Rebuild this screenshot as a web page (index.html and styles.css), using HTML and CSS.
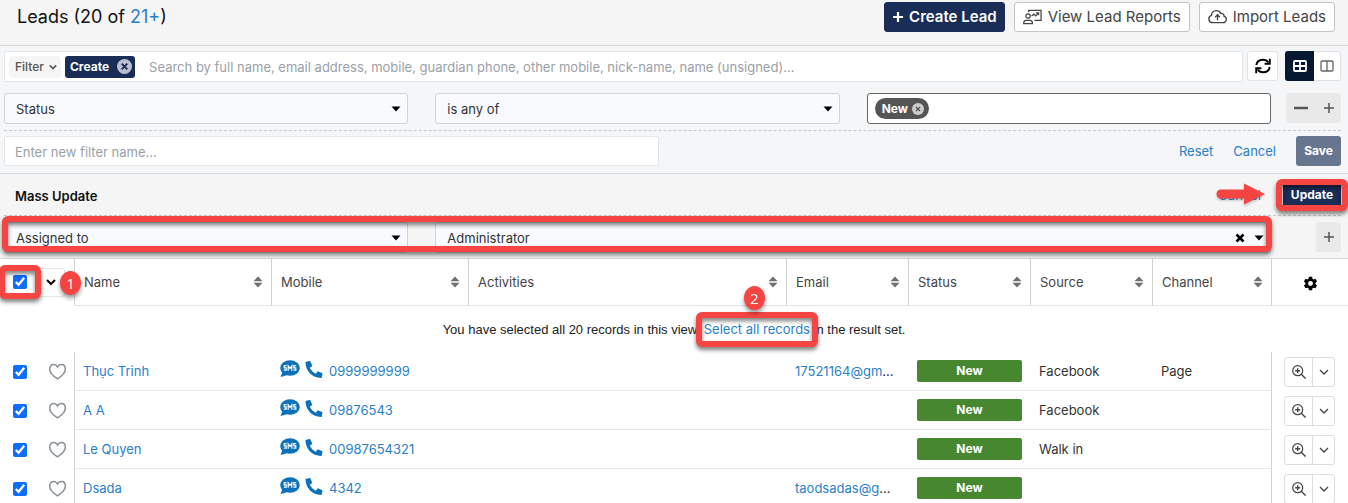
FILE: index.html
```html
<!DOCTYPE html>
<html lang="en">
<head>
<meta charset="utf-8">
<title>Leads</title>
<link rel="stylesheet" href="styles.css">
</head>
<body>
<svg class="defs" aria-hidden="true">
  <symbol id="caret" viewBox="0 0 10 6"><path d="M0.5 0.5h9L5 5.5z" fill="currentColor"/></symbol>
  <symbol id="chev" viewBox="0 0 10 10"><path d="M1 3l4 4 4-4" fill="none" stroke="currentColor" stroke-width="var(--w,1.3)"/></symbol>
  <symbol id="sort" viewBox="0 0 10 12"><path d="M5 0.5l4.5 4.8h-9zM5 11.5l4.500-4.800h-9z" fill="#707070"/></symbol>
  <symbol id="heart" viewBox="0 0 20 18"><path d="M10 16.700C7.600 15.200 1.700 11.400 1.700 6.300 1.700 3.400 3.600 1.500 5.900 1.500c1.900 0 3.300 1 4.100 2.700.8-1.700 2.200-2.700 4.100-2.700 2.300 0 4.200 1.900 4.200 4.800 0 5.100-5.900 8.900-8.300 10.400z" fill="none" stroke="#8a9199" stroke-width="1.600"/></symbol>
  <symbol id="sms" viewBox="0 0 20 18"><ellipse cx="10" cy="8" rx="9.800" ry="7.800" fill="#0d71ba"/><path d="M2 10.500C2.300 13 1.700 15 .3 16.600c2.500.2 4.900-.5 6.900-2z" fill="#0d71ba"/><path d="M6.600 5.600H4.200v2.300h2v2.300H3.800M8.200 10.800V5.800l1.800 2.600 1.800-2.600v5M16.200 5.600h-2.400v2.300h2v2.300h-2.400" fill="none" stroke="#fff" stroke-width="1.200"/></symbol>
  <symbol id="phone" viewBox="0 0 512 512"><path transform="translate(512 0) scale(-1 1)" fill="#0d71ba" d="M493.400 24.600l-104-24c-11.300-2.600-22.900 3.300-27.500 13.900l-48 112c-4.200 9.800-1.400 21.300 6.900 28l60.600 49.600c-36 76.700-98.900 140.500-177.200 177.200l-49.600-60.600c-6.800-8.300-18.200-11.100-28-6.900l-112 48C3.900 366.500-2 378.100.6 389.400l24 104C27.100 504.200 36.700 512 48 512c256.100 0 464-207.500 464-464 0-11.200-7.700-20.900-18.600-23.400z"/></symbol>
  <symbol id="zoom" viewBox="0 0 14 14"><circle cx="5.700" cy="5.700" r="5" fill="none" stroke="#444" stroke-width="1.200"/><path d="M5.700 3.200v5M3.200 5.700h5M9.300 9.300l4.300 4.300" fill="none" stroke="#444" stroke-width="1.400"/></symbol>
  <symbol id="plus" viewBox="0 0 12 12"><path d="M6 1v10M1 6h10" fill="none" stroke="currentColor" stroke-width="var(--w,1.5)"/></symbol>
</svg>

<div class="app">
  <header class="top">
    <h1>Leads (20 of <a href="#">21+</a>)</h1>
    <div class="top-actions">
      <button class="btn primary"><svg class="i12 bold"><use href="#plus"/></svg>Create Lead</button>
      <button class="btn"><svg class="i19" viewBox="0 0 20 16" fill="none" stroke="#444" stroke-width="1.300"><path d="M6 3V1h13v10.500h-7"/><circle cx="5.300" cy="7" r="2.300"/><path d="M.8 15v-1c0-1.500 1.200-2.500 2.700-2.500h3.700c1.500 0 2.700 1 2.700 2.500v1zM9 7l2.500-2 1.800 1.800 3-3M13.800 3.700h2.600v2.500"/></svg>View Lead Reports</button>
      <button class="btn"><svg class="i19" viewBox="0 0 20 16" fill="none" stroke="#444" stroke-width="1.400"><path d="M5 14a4 4 0 0 1-1.300-7.800C3.600 3.300 6 1.200 8.700 1.200c2.200 0 4 1.200 4.800 3 1.900-.3 3.500.9 3.300 3 1.500.5 2.500 1.800 2.500 3.300A3.500 3.500 0 0 1 15.800 14z"/><path d="M10 11.500V6M7.500 8.200 10 5.700l2.500 2.500"/></svg>Import Leads</button>
    </div>
  </header>

  <section class="filters">
    <div class="search-row">
      <div class="search">
        <button class="filter-btn">Filter <svg class="i8 heavy"><use href="#chev"/></svg></button>
        <button class="chip">Create <svg class="i15" viewBox="0 0 16 16"><circle cx="8" cy="8" r="8" fill="#b9c1d0"/><path d="M5 5l6 6M11 5l-6 6" stroke="#1a2d57" stroke-width="2"/></svg></button>
        <input type="text" aria-label="Search leads" placeholder="Search by full name, email address, mobile, guardian phone, other mobile, nick-name, name (unsigned)...">
      </div>
      <button class="square" aria-label="Refresh"><svg class="i16" viewBox="0 0 16 16" fill="none" stroke="#000" stroke-width="1.900"><path d="M1.300 7C1.800 3.900 4.500 1.700 7.900 1.700c2.300 0 4.300 1 5.500 2.800M14.700 9c-.5 3.100-3.200 5.300-6.600 5.300-2.300 0-4.300-1-5.500-2.800"/><path d="M14.800.7v5H9.600M1.200 15.300v-5h5.200"/></svg></button>
      <div class="views">
        <button class="view on" aria-label="Grid view"><svg class="i14" viewBox="0 0 14 12" fill="none" stroke="#fff" stroke-width="1.800"><rect x="1" y="1" width="12" height="10" rx="1"/><path d="M7 1v10M1 6h12"/></svg></button>
        <button class="view" aria-label="Split view"><svg class="i14" viewBox="0 0 14 12" fill="none" stroke="#666" stroke-width="1.300"><rect x="1" y="1" width="12" height="10" rx="1"/><path d="M7 1v10"/></svg></button>
      </div>
    </div>

    <div class="row rule">
      <div class="fields">
        <div class="select"><select aria-label="Field"><option>Status</option></select><svg class="caret"><use href="#caret"/></svg></div>
        <div class="select"><select aria-label="Operator"><option>is any of</option></select><svg class="caret"><use href="#caret"/></svg></div>
        <div class="tags"><button class="tag">New <svg class="i12" viewBox="0 0 12 12"><circle cx="6" cy="6" r="6" fill="#ccc"/><path d="M4 4l4 4M8 4l-4 4" stroke="#555" stroke-width="1.300"/></svg></button><input type="text" aria-label="Status values"></div>
      </div>
      <div class="tail"><div class="pm">
        <button class="minus" aria-label="Remove filter"><svg class="i14" viewBox="0 0 14 12"><path d="M0 6h14" stroke="#555" stroke-width="2.500"/></svg></button>
        <button aria-label="Add filter"><svg class="i12"><use href="#plus"/></svg></button>
      </div></div>
    </div>

    <div class="name-row">
      <input type="text" aria-label="Filter name" placeholder="Enter new filter name...">
      <div class="links"><a href="#">Reset</a><a href="#">Cancel</a><button class="save">Save</button></div>
    </div>
  </section>

  <section class="mass">
    <div class="mass-head">
      <h2>Mass Update</h2>
      <div class="mass-actions">
        <a class="marked" href="#">Cancel<svg class="arrow" viewBox="0 0 50 24"><path d="M4.500 7.500H28V1.500L49 12 28 22.500v-6H4.500a4 4.500 0 0 1 0-9z" fill="#f44542"/></svg></a>
        <div class="marked"><button class="update">Update</button><span class="mark mark-update"></span></div>
      </div>
    </div>
    <div class="row">
      <div class="fields marked">
        <div class="select"><select aria-label="Update field"><option>Assigned to</option></select><svg class="caret"><use href="#caret"/></svg></div>
        <div class="select wide"><select aria-label="Update value"><option>Administrator</option></select><button class="clear" aria-label="Clear"><svg viewBox="0 0 10 10"><path d="M1.500 1.500l7 7M8.500 1.500l-7 7" stroke="#000" stroke-width="2.600"/></svg></button><svg class="caret"><use href="#caret"/></svg></div>
        <span class="mark mark-fields"></span>
      </div>
      <div class="tail"><div class="pm"><button aria-label="Add field"><svg class="i12"><use href="#plus"/></svg></button></div></div>
    </div>
  </section>

  <main class="list">
    <table>
      <colgroup><col class="c-check"><col class="c-name"><col class="c-name"><col class="c-act"><col class="c-std"><col class="c-std"><col class="c-std"><col class="c-chan"><col class="c-tools"></colgroup>
      <thead>
        <tr>
          <th><div class="pick"><div class="marked"><input type="checkbox" checked aria-label="Select all"><span class="mark mark-check"></span></div><button class="drop" aria-label="Selection menu"><svg class="i10 heavy"><use href="#chev"/></svg></button><span class="badge badge-one">1</span></div></th>
          <th><div class="h">Name<svg class="sort"><use href="#sort"/></svg></div></th>
          <th><div class="h">Mobile<svg class="sort"><use href="#sort"/></svg></div></th>
          <th><div class="h">Activities<svg class="sort"><use href="#sort"/></svg></div></th>
          <th><div class="h">Email<svg class="sort"><use href="#sort"/></svg></div></th>
          <th><div class="h">Status<svg class="sort"><use href="#sort"/></svg></div></th>
          <th><div class="h">Source<svg class="sort"><use href="#sort"/></svg></div></th>
          <th><div class="h">Channel<svg class="sort"><use href="#sort"/></svg></div></th>
          <th class="tools"><button class="gear" aria-label="Columns"><svg viewBox="0 0 16 16"><path fill-rule="evenodd" fill="#000" d="M6.300.8h3.400l.4 2.100 1.200.7 2-.7L15 5.800l-1.600 1.400v1.600L15 10.200l-1.700 2.900-2-.7-1.200.7-.4 2.100H6.300l-.4-2.100-1.200-.7-2 .7L1 10.200l1.600-1.400V7.200L1 5.800l1.700-2.900 2 .7 1.200-.7zM8 5.400a2.600 2.600 0 1 0 0 5.200 2.600 2.600 0 0 0 0-5.200z"/></svg></button></th>
        </tr>
      </thead>
      <tbody>
        <tr class="note"><td colspan="9">You have selected all 20 records in this view. <span class="marked"><a href="#">Select all records</a><span class="mark mark-all"></span><span class="badge badge-two">2</span></span> in the result set.</td></tr>
        <tr>
          <td><div class="pick"><input type="checkbox" checked aria-label="Select Thục Trinh"><svg class="heart"><use href="#heart"/></svg></div></td>
          <td><a href="#">Thục Trinh</a></td>
          <td><div class="tel"><svg class="sms"><use href="#sms"/></svg><svg class="phone"><use href="#phone"/></svg><a href="#">0999999999</a></div></td>
          <td></td><td><a href="#">17521164@gm</a>...</td><td><span class="status">New</span></td><td>Facebook</td><td>Page</td>
          <td><div class="act"><button aria-label="Preview"><svg class="i14"><use href="#zoom"/></svg></button><button aria-label="More"><svg class="i10"><use href="#chev"/></svg></button></div></td>
        </tr>
        <tr>
          <td><div class="pick"><input type="checkbox" checked aria-label="Select A A"><svg class="heart"><use href="#heart"/></svg></div></td>
          <td><a href="#">A A</a></td>
          <td><div class="tel"><svg class="sms"><use href="#sms"/></svg><svg class="phone"><use href="#phone"/></svg><a href="#">09876543</a></div></td>
          <td></td><td></td><td><span class="status">New</span></td><td>Facebook</td><td></td>
          <td><div class="act"><button aria-label="Preview"><svg class="i14"><use href="#zoom"/></svg></button><button aria-label="More"><svg class="i10"><use href="#chev"/></svg></button></div></td>
        </tr>
        <tr>
          <td><div class="pick"><input type="checkbox" checked aria-label="Select Le Quyen"><svg class="heart"><use href="#heart"/></svg></div></td>
          <td><a href="#">Le Quyen</a></td>
          <td><div class="tel"><svg class="sms"><use href="#sms"/></svg><svg class="phone"><use href="#phone"/></svg><a href="#">00987654321</a></div></td>
          <td></td><td></td><td><span class="status">New</span></td><td>Walk in</td><td></td>
          <td><div class="act"><button aria-label="Preview"><svg class="i14"><use href="#zoom"/></svg></button><button aria-label="More"><svg class="i10"><use href="#chev"/></svg></button></div></td>
        </tr>
        <tr>
          <td><div class="pick"><input type="checkbox" checked aria-label="Select Dsada"><svg class="heart"><use href="#heart"/></svg></div></td>
          <td><a href="#">Dsada</a></td>
          <td><div class="tel"><svg class="sms"><use href="#sms"/></svg><svg class="phone"><use href="#phone"/></svg><a href="#">4342</a></div></td>
          <td></td><td><a href="#">taodsadas@g</a>...</td><td><span class="status">New</span></td><td></td><td></td>
          <td><div class="act"><button aria-label="Preview"><svg class="i14"><use href="#zoom"/></svg></button><button aria-label="More"><svg class="i10"><use href="#chev"/></svg></button></div></td>
        </tr>
      </tbody>
    </table>
  </main>
</div>
</body>
</html>
```
FILE: styles.css
```css
* { box-sizing: border-box; }
body { margin: 0; background: #fff; color: #333; font: 13px/18px Inter, "Liberation Sans", sans-serif; }
button, input, select { font: inherit; color: inherit; margin: 0; }
button { padding: 0; border: 0; background: none; display: inline-flex; align-items: center; justify-content: center; }
a { color: #2a7fc9; text-decoration: none; }
svg { display: block; flex: none; }
.defs { position: absolute; width: 0; height: 0; }
.i8 { width: 8px; height: 8px; }
.i10 { width: 10px; height: 10px; }
.i12 { width: 12px; height: 12px; }
.i14 { width: 14px; height: 14px; }
.i15 { width: 15px; height: 15px; }
.i16 { width: 16px; height: 16px; }
.i19 { width: 19px; height: 16px; }
.heavy { --w: 2; }
.bold { --w: 2.2; }

.app { height: 100vh; display: flex; flex-direction: column; overflow: hidden; }

/* Header */
.top { display: flex; justify-content: space-between; align-items: flex-start; height: 46px; padding: 2px 13px 0 17px; background: #f5f5f5; border-bottom: 1px solid #d5d7da; flex: none; }
.top h1 { margin: 0; font-size: 18px; line-height: 30px; font-weight: 400; color: #111; }
.top-actions { display: flex; gap: 9px; }
.btn { height: 30px; gap: 6px; padding: 0 8px; border: 1px solid #c4c4c4; border-radius: 3px; background: #fff; font-size: 15px; color: #444; }
.btn.primary { gap: 5px; padding: 0 7px; background: #1a2d57; border-color: #1a2d57; color: #fff; font-weight: 600; }

/* Filters */
.filters { flex: none; background: #f5f6f7; border-bottom: 1px solid #d5d7da; padding: 5px 7px 7px 4px; }
.search-row { display: flex; }
.search { flex: 1; display: flex; align-items: center; height: 31px; padding: 0 4px; background: #fff; border: 1px solid #e4e7ea; border-radius: 2px; }
.search input { flex: 1; min-width: 0; border: 0; outline: 0; padding: 1px 0 0 14px; background: none; }
input::placeholder { color: #9aa0a6; opacity: 1; }
.filter-btn { height: 22px; gap: 5px; padding: 0 4px 0 6px; background: #f5f5f5; border-radius: 4px; font-size: 12px; font-weight: 500; color: #555; }
.chip { height: 22px; gap: 8px; padding: 0 3px 0 5px; margin-left: 4px; background: #1a2d57; border-radius: 3px; color: #fff; font-size: 12px; font-weight: 700; }
.square { width: 31px; height: 30px; margin-left: 4px; background: #fff; border: 1px solid #e1e3e6; border-radius: 3px; }
.views { display: flex; margin-left: 7px; border: 1px solid #dfe1e4; border-radius: 3px; height: 30px; background: #fff; }
.view { width: 27px; }
.view.on { background: #06182f; box-shadow: 0 0 0 1px #06182f; border-radius: 2px 0 0 2px; }
.row { display: flex; gap: 15px; }
.row.rule { padding: 11px 0 6px; border-bottom: 1px dashed #c5c8cb; }
.fields { flex: 1; display: grid; grid-template-columns: repeat(3, 1fr); gap: 27px; }
.select { position: relative; }
.select.wide { grid-column: span 2; }
.select select { width: 100%; height: 31px; padding: 0 32px 0 11px; appearance: none; background: #f8fafe; border: 1px solid #cfd3d8; border-radius: 3px; }
.caret { position: absolute; right: 7px; top: 13px; width: 10px; height: 6px; color: #000; pointer-events: none; }
.clear { position: absolute; right: 26px; top: 10px; width: 11px; height: 11px; }
.clear svg { width: 10px; height: 10px; }
.tags { display: flex; align-items: center; height: 31px; padding: 0 7px; background: #fff; border: 1px solid #666; border-radius: 3px; }
.tags input { flex: 1; min-width: 0; border: 0; outline: 0; background: none; }
.tag { height: 21px; gap: 4px; padding: 0 5px 0 7px; background: #555; border-radius: 11px; color: #fff; font-size: 12px; font-weight: 700; }
.tail { width: 55px; display: flex; justify-content: flex-end; }
.pm { display: flex; height: 30px; background: #e9e9e9; border-radius: 3px; color: #555; }
.pm button { width: 25px; }
.pm .minus { width: 30px; }
.name-row { display: flex; justify-content: space-between; padding-top: 5px; }
.name-row input { width: 49%; height: 30px; padding: 2px 10px 0; background: #fff; border: 1px solid #e4e7ea; border-radius: 2px; outline: 0; }
.links { display: flex; align-items: center; gap: 20px; }
.save, .update { width: 45px; height: 30px; background: #68758f; border-radius: 3px; color: #fff; font-size: 12px; font-weight: 700; }

/* Mass update */
.mass { flex: none; background: #f5f5f5; padding: 0 7px 5px 4px; }
.mass-head { display: flex; justify-content: space-between; align-items: center; height: 42px; padding-left: 11px; border-bottom: 1px dashed #c5c8cb; }
.mass-head h2 { margin: 2px 0 0; font-size: 13px; line-height: 18px; font-weight: 600; color: #111; }
.mass-actions { display: flex; align-items: center; gap: 22px; }
.update { width: 58px; background: #1a2d57; }
.mass .row { padding-top: 6px; }

/* Table */
.list { flex: 1; min-height: 0; overflow: hidden; }
table { width: 100%; table-layout: fixed; border-collapse: separate; border-spacing: 0; }
.c-check { width: 75px; }
.c-name { width: 197px; }
.c-std { width: 122px; }
.c-chan { width: 119px; }
.c-tools { width: 76px; }
th { height: 48px; padding: 0 8px 0 9px; text-align: left; font-weight: 400; color: #444; border-top: 1px solid #d5d7da; border-bottom: 1px solid #e0e2e4; border-right: 1px solid #d0d3d6; }
th:first-child { border-bottom-color: transparent; }
th:last-child, td:last-child { border-right: 0; }
td { height: 39px; padding: 0 9px 0 8px; border-bottom: 1px solid #e6e8ea; white-space: nowrap; }
td:first-child { border-right: 1px solid #d0d3d6; border-bottom: 0; }
td:nth-last-child(2) { border-right: 1px solid #d0d3d6; }
td:last-child { border-bottom: 0; padding: 0 12px; }
th:first-child, td:first-child { padding: 0; }
.note td:first-child { height: 46px; border: 0; text-align: center; font-family: "Liberation Sans", sans-serif; color: #222; padding: 0; }
.note a { font-family: Inter, sans-serif; }
.h { display: flex; justify-content: space-between; align-items: center; }
.sort { width: 10px; height: 12px; }
.pick { position: relative; display: flex; align-items: center; padding-left: 13px; }
.pick input { display: block; width: 14px; height: 14px; accent-color: #0d6efd; }
.drop { width: 27px; height: 29px; margin-left: 11px; border: 1px solid #e3e5e8; border-left: 0; border-radius: 3px; color: #000; }
.heart { width: 19px; height: 17px; margin-left: 21px; }
.tel { display: flex; align-items: center; }
.sms { width: 20px; height: 18px; margin-bottom: 5px; }
.phone { width: 18px; height: 17px; margin: 0 6px 4px 5px; }
.status { display: block; height: 22px; line-height: 22px; border-radius: 2px; background: #478730; color: #fff; text-align: center; font-size: 12px; font-weight: 700; }
.tools { text-align: center; }
.gear { width: 16px; height: 16px; vertical-align: middle; }
.gear svg { width: 15px; height: 15px; }
.act { display: inline-flex; height: 30px; border: 1px solid #dcdee0; border-radius: 3px; vertical-align: middle; }
.act button { width: 27px; color: #444; }
.act button + button { width: 22px; border-left: 1px solid #dcdee0; }

/* Guide marks drawn over the page */
.marked { position: relative; }
.mark { position: absolute; border: 6px solid #f44542; border-radius: 6px; pointer-events: none; z-index: 2; filter: drop-shadow(0 3px 2px rgba(0, 0, 0, .5)); }
.mark-update { inset: -1px -7px; }
.mark-fields { inset: -6px -1px 1px -2px; }
.mark-check { inset: -10px -14px; }
.mark-all { inset: -10px -8px; }
.arrow { position: absolute; left: -2px; top: -4px; width: 50px; height: 24px; filter: drop-shadow(0 2px 1px rgba(0, 0, 0, .2)); }
.badge { position: absolute; z-index: 3; width: 21px; height: 24px; border-radius: 50%; background: #f44542; color: #fff; font: 15px/24px "Open Sans", sans-serif; text-align: center; filter: drop-shadow(0 3px 2px rgba(0, 0, 0, .4)); }
.badge-one { left: 60px; top: 3px; }
.badge-two { left: 40px; top: -36px; }
```
